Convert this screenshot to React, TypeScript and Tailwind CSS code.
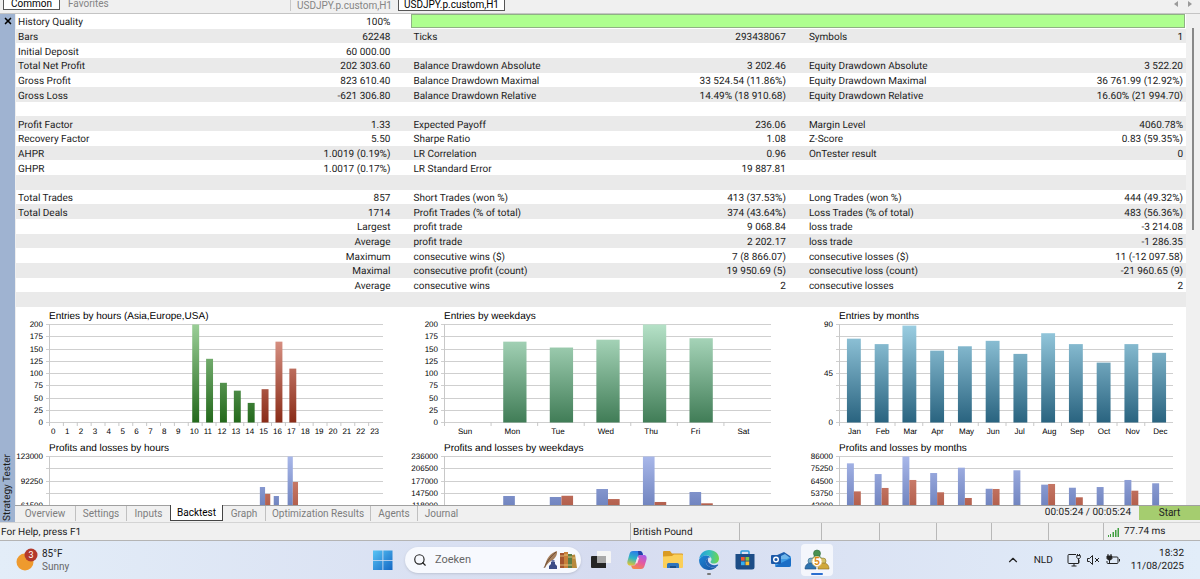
import type { ReactNode } from 'react';
import { ChevronUp, Search, X } from 'lucide-react';

type Cell = [label: string, value: string];

const EMPTY: Cell = ['', ''];

const STATS: [Cell, Cell, Cell][] = [
  [['Bars', '62248'], ['Ticks', '293438067'], ['Symbols', '1']],
  [['Initial Deposit', '60 000.00'], EMPTY, EMPTY],
  [
    ['Total Net Profit', '202 303.60'],
    ['Balance Drawdown Absolute', '3 202.46'],
    ['Equity Drawdown Absolute', '3 522.20'],
  ],
  [
    ['Gross Profit', '823 610.40'],
    ['Balance Drawdown Maximal', '33 524.54 (11.86%)'],
    ['Equity Drawdown Maximal', '36 761.99 (12.92%)'],
  ],
  [
    ['Gross Loss', '-621 306.80'],
    ['Balance Drawdown Relative', '14.49% (18 910.68)'],
    ['Equity Drawdown Relative', '16.60% (21 994.70)'],
  ],
  [EMPTY, EMPTY, EMPTY],
  [
    ['Profit Factor', '1.33'],
    ['Expected Payoff', '236.06'],
    ['Margin Level', '4060.78%'],
  ],
  [
    ['Recovery Factor', '5.50'],
    ['Sharpe Ratio', '1.08'],
    ['Z-Score', '0.83 (59.35%)'],
  ],
  [
    ['AHPR', '1.0019 (0.19%)'],
    ['LR Correlation', '0.96'],
    ['OnTester result', '0'],
  ],
  [['GHPR', '1.0017 (0.17%)'], ['LR Standard Error', '19 887.81'], EMPTY],
  [EMPTY, EMPTY, EMPTY],
  [
    ['Total Trades', '857'],
    ['Short Trades (won %)', '413 (37.53%)'],
    ['Long Trades (won %)', '444 (49.32%)'],
  ],
  [
    ['Total Deals', '1714'],
    ['Profit Trades (% of total)', '374 (43.64%)'],
    ['Loss Trades (% of total)', '483 (56.36%)'],
  ],
  [['', 'Largest'], ['profit trade', '9 068.84'], ['loss trade', '-3 214.08']],
  [['', 'Average'], ['profit trade', '2 202.17'], ['loss trade', '-1 286.35']],
  [
    ['', 'Maximum'],
    ['consecutive wins ($)', '7 (8 866.07)'],
    ['consecutive losses ($)', '11 (-12 097.58)'],
  ],
  [
    ['', 'Maximal'],
    ['consecutive profit (count)', '19 950.69 (5)'],
    ['consecutive loss (count)', '-21 960.65 (9)'],
  ],
  [['', 'Average'], ['consecutive wins', '2'], ['consecutive losses', '2']],
  [EMPTY, EMPTY, EMPTY],
];

const HOURS = Array.from({ length: 24 }, (_, i) => String(i));
const WEEKDAYS = ['Sun', 'Mon', 'Tue', 'Wed', 'Thu', 'Fri', 'Sat'];
const MONTHS = [
  'Jan', 'Feb', 'Mar', 'Apr', 'May', 'Jun',
  'Jul', 'Aug', 'Sep', 'Oct', 'Nov', 'Dec',
];

// slot index -> bar values, drawn side by side; each bar names its gradient
type Bar = { slot: number; values: number[]; fills: string[] };

const single = (from: number, fill: string, values: number[]): Bar[] =>
  values.map((v, i) => ({ slot: from + i, values: [v], fills: [fill] }));

const profitLoss = (from: number, pairs: number[][]): Bar[] =>
  pairs.map((values, i) => ({
    slot: from + i,
    values,
    fills: ['profit', 'loss'],
  }));

type ChartProps = {
  title: string;
  viewWidth: number;
  plotWidth: number;
  max: number;
  labels: string[];
  labelEvery?: number;
  categories: string[];
  categoryOffset: number;
  barInset?: number;
  bars: Bar[];
};

const CHARTS: ChartProps[] = [
  {
    title: 'Entries by hours (Asia,Europe,USA)',
    viewWidth: 395,
    plotWidth: 333,
    max: 200,
    labels: ['200', '175', '150', '125', '100', '75', '50', '25', '0'],
    categories: HOURS,
    categoryOffset: 1,
    bars: [
      ...single(10, 'europe', [200, 130, 81, 65, 40]),
      ...single(15, 'usa', [68, 165, 110]),
    ],
  },
  {
    title: 'Entries by weekdays',
    viewWidth: 395,
    plotWidth: 326,
    max: 200,
    labels: ['200', '175', '150', '125', '100', '75', '50', '25', '0'],
    categories: WEEKDAYS,
    categoryOffset: 13,
    bars: single(1, 'weekday', [165, 153, 169, 200, 172]),
  },
  {
    title: 'Entries by months',
    viewWidth: 380,
    plotWidth: 333,
    max: 90,
    labels: ['90', '45', '0'],
    labelEvery: 4,
    categories: MONTHS,
    categoryOffset: 8,
    bars: single(0, 'month', [77, 72, 89, 66, 70, 75, 63, 82, 72, 55, 72, 64]),
  },
  {
    title: 'Profits and losses by hours',
    viewWidth: 395,
    plotWidth: 333,
    max: 123000,
    labels: ['123000', '92250', '61500', '30750', '0'],
    labelEvery: 2,
    categories: HOURS,
    categoryOffset: 1,
    barInset: 0.125,
    bars: profitLoss(15, [[84700, 76000], [73400, 0], [123000, 91000]]),
  },
  {
    title: 'Profits and losses by weekdays',
    viewWidth: 395,
    plotWidth: 326,
    max: 236000,
    labels: ['236000', '206500', '177000', '147500', '118000', '88500', '59000', '29500', '0'],
    categories: WEEKDAYS,
    categoryOffset: 13,
    bars: profitLoss(1, [
      [140900, 0],
      [138500, 141500],
      [157700, 133500],
      [236000, 126500],
      [150500, 123300],
    ]),
  },
  {
    title: 'Profits and losses by months',
    viewWidth: 380,
    plotWidth: 333,
    max: 86000,
    labels: ['86000', '75250', '64500', '53750', '43000', '32250', '21500', '10750', '0'],
    categories: MONTHS,
    categoryOffset: 8,
    bars: profitLoss(0, [
      [80000, 55400],
      [70600, 58400],
      [86000, 65400],
      [71500, 54600],
      [76200, 49600],
      [57700, 57500],
      [73900, 0],
      [61300, 61900],
      [58600, 50200],
      [59200, 0],
      [65400, 56000],
      [62500, 0],
    ]),
  },
];

const GRADIENTS = [
  ['europe', '#9bcf98', '#24691c'],
  ['usa', '#e6a497', '#8a2c18'],
  ['weekday', '#b6e2c8', '#417d57'],
  ['month', '#9ccfe3', '#2a6480'],
  ['profit', '#a9b8ea', '#3a5296'],
  ['loss', '#dd9483', '#8a2c18'],
];

const PLOT_X = 34;
const PLOT_Y = 17;
const PLOT_H = 98;

function Chart({
  title,
  viewWidth,
  plotWidth,
  max,
  labels,
  labelEvery = 1,
  categories,
  categoryOffset,
  barInset = 0.25,
  bars,
}: ChartProps) {
  const slot = plotWidth / categories.length;
  const bottom = PLOT_Y + PLOT_H;

  return (
    <svg
      viewBox={`0 0 ${viewWidth} 132`}
      className="block w-full font-['Liberation_Sans',Arial,sans-serif] text-[8px] [text-rendering:geometricPrecision]"
      role="img"
      aria-label={title}
    >
      <text x={PLOT_X - 1} y="12" className="fill-black text-[10px]">
        {title}
      </text>
      {Array.from({ length: 9 }, (_, i) => {
        const y = Math.round(PLOT_Y + (i * PLOT_H) / 8) + 0.5;
        return (
          <line key={i} x1={PLOT_X - 4} x2={PLOT_X + plotWidth} y1={y} y2={y} stroke="#cfcfcf" />
        );
      })}
      <line x1={PLOT_X - 0.5} x2={PLOT_X - 0.5} y1={PLOT_Y} y2={bottom + 4} stroke="#c8c8c8" />
      {labels.map((label, i) => (
        <text
          key={label}
          x={PLOT_X - 7}
          y={PLOT_Y + (i * labelEvery * PLOT_H) / 8 + 3}
          textAnchor="end"
          className="fill-black"
        >
          {label}
        </text>
      ))}
      {categories.map((name, i) => (
        <g key={name}>
          <line
            x1={PLOT_X - 0.5 + i * slot}
            x2={PLOT_X - 0.5 + i * slot}
            y1={bottom}
            y2={bottom + 4}
            stroke="#c8c8c8"
          />
          <text x={PLOT_X + i * slot + categoryOffset} y="127" className="fill-black">
            {name}
          </text>
        </g>
      ))}
      {bars.map((bar) => {
        const width = (slot * (1 - barInset * 2)) / bar.values.length;
        return bar.values.map((value, i) => {
          const height = (value / max) * PLOT_H;
          return (
            <rect
              key={`${bar.slot}-${i}`}
              x={PLOT_X + bar.slot * slot + slot * barInset + i * width}
              y={bottom + 0.5 - height}
              width={width}
              height={height}
              fill={`url(#${bar.fills[i]})`}
            />
          );
        });
      })}
    </svg>
  );
}

function GradientDefs() {
  return (
    <svg width="0" height="0" className="absolute" aria-hidden="true">
      <defs>
        {GRADIENTS.map(([id, from, to]) => (
          <linearGradient
            key={id}
            id={id}
            gradientUnits="userSpaceOnUse"
            x1="0"
            x2="0"
            y1={PLOT_Y}
            y2={PLOT_Y + PLOT_H}
          >
            <stop stopColor={from} />
            <stop offset="1" stopColor={to} />
          </linearGradient>
        ))}
      </defs>
    </svg>
  );
}

function StatsTable() {
  return (
    <table className="h-[293px] w-full table-fixed border-collapse text-[10px] leading-[11px] whitespace-nowrap">
      <colgroup>
        <col className="w-[16.9%]" />
        <col className="w-[16.9%]" />
        <col className="w-[16.9%]" />
        <col className="w-[16.9%]" />
        <col />
        <col />
      </colgroup>
      <tbody>
        <tr>
          <th scope="row" className="h-3.5 p-0 pt-[3px] pl-0.5 text-left font-normal">
            History Quality
          </th>
          <td className="p-0 pt-[3px] pr-[21px] text-right">100%</td>
          <td colSpan={4} className="p-0 pr-px align-top">
            <div className="h-3.5 border border-[#8fb184] bg-[#aeff8f]" />
          </td>
        </tr>
        {STATS.map((row, i) => (
          <tr key={i} className="odd:bg-white even:bg-[#eaeaea]">
            {row.map(([label, value], j) => [
              <th key={`l${j}`} scope="row" className="h-3.5 p-0 pt-[3px] pl-0.5 text-left font-normal">
                {label}
              </th>,
              <td
                key={`v${j}`}
                className={j === 2 ? 'p-0 pt-[3px] pr-[3px] text-right' : 'p-0 pt-[3px] pr-[21px] text-right'}
              >
                {value}
              </td>,
            ])}
          </tr>
        ))}
      </tbody>
    </table>
  );
}

function WindowTabs() {
  return (
    <header className="flex h-3.5 shrink-0 items-end overflow-hidden border-b border-[#c4c4c4] pb-0.5 text-[10px] leading-[10px] text-[#858585]">
      <nav className="flex w-[290px] items-end pb-px pl-[3px]">
        <button className="w-[57px] border border-[#555] bg-white text-black">Common</button>
        <button className="px-2 pb-px">Favorites</button>
      </nav>
      <nav className="flex flex-1 items-end border-l border-[#c8c8c8]">
        <button className="w-[107px]">USDJPY.p.custom,H1</button>
        <button className="w-[107px] border border-[#555] bg-white text-black">USDJPY.p.custom,H1</button>
      </nav>
      <div className="flex gap-2.5 pr-2 pb-1">
        <button aria-label="Scroll tabs left">
          <svg viewBox="0 0 4 6" className="h-1.5 w-1 fill-[#9a9a9a]">
            <path d="M4 0v6L0 3z" />
          </svg>
        </button>
        <button aria-label="Scroll tabs right">
          <svg viewBox="0 0 4 6" className="h-1.5 w-1 fill-[#9a9a9a]">
            <path d="M0 0v6l4-3z" />
          </svg>
        </button>
      </div>
    </header>
  );
}

const TABS = [
  { name: 'Overview', className: 'w-[61px]' },
  { name: 'Settings', className: 'w-[51px]' },
  { name: 'Inputs', className: 'w-[43px]' },
  { name: 'Backtest', className: 'w-[53px]' },
  { name: 'Graph', className: 'w-[43px]' },
  { name: 'Optimization Results', className: 'w-[105px]' },
  { name: 'Agents', className: 'w-[47px]' },
  { name: 'Journal', className: 'w-[47px]' },
];

function TesterTabs() {
  return (
    <div className="flex h-[17px] shrink-0 items-start border-t border-[#a0a0a0] text-[10px] leading-[14px] whitespace-nowrap">
      <nav className="flex flex-1">
        {TABS.map(({ name, className }) =>
          name === 'Backtest' ? (
            <button
              key={name}
              className={`${className} -mt-px border border-t-0 border-[#444] bg-white pt-px text-black`}
            >
              {name}
            </button>
          ) : (
            <button
              key={name}
              className={`${className} border-r border-[#c0c0c0] text-[#7d7d7d] last:border-r-0 nth-[3]:border-r-0`}
            >
              {name}
            </button>
          )
        )}
      </nav>
      <span className="pr-2 text-[#222]">00:05:24 / 00:05:24</span>
      <button className="w-[61px] bg-[#a5cd6f] text-[#222]">Start</button>
    </div>
  );
}

function StatusBar() {
  return (
    <footer className="flex h-[19px] shrink-0 items-stretch border-y border-t-[#d4d4d4] border-b-[#b4b4b4] text-[10px] leading-[19px] text-[#222]">
      <span className="flex-1 pl-px">For Help, press F1</span>
      <span className="w-[109px] border-l border-[#b8b8b8] pl-0.5">British Pound</span>
      <span className="w-[82px] border-l border-[#b8b8b8]" />
      <span className="w-[58px] border-l border-[#b8b8b8]" />
      <span className="w-[57px] border-l border-[#b8b8b8]" />
      <span className="w-[55px] border-l border-[#b8b8b8]" />
      <span className="w-[57px] border-l border-[#b8b8b8]" />
      <span className="w-[55px] border-l border-[#b8b8b8]" />
      <span className="flex w-[97px] items-center gap-1 border-l border-[#b8b8b8] pl-1">
        <svg viewBox="0 0 12 10" className="h-2.5 w-3 fill-[#3f9f3f]" aria-hidden="true">
          <path d="M0 8h1v2H0zM2 7h1v3H2zM4.500 5h1.500v5h-1.500zM7 3h1.500v7H7zM9.500 1H11v9H9.500z" />
        </svg>
        77.74 ms
      </span>
    </footer>
  );
}

function TaskbarButton({ label, active, children }: { label: string; active?: boolean; children: ReactNode }) {
  return (
    <button aria-label={label} className="flex h-full w-9 items-center justify-center">
      <span
        className={
          active
            ? 'flex size-8 items-center justify-center rounded-sm bg-white/70'
            : 'flex size-8 items-center justify-center'
        }
      >
        {children}
      </span>
    </button>
  );
}

function WindowsLogo() {
  return (
    <svg viewBox="0 0 20 20" className="size-5">
      <defs>
        <linearGradient id="win" x1="0" y1="0" x2="1" y2="1">
          <stop stopColor="#58c4f5" />
          <stop offset="1" stopColor="#1467c4" />
        </linearGradient>
      </defs>
      <path fill="url(#win)" d="M0 .5h9.500V10H0zM10.300.5H19.500V10h-9.200zM0 10.700h9.500V20H0zM10.300 10.700h9.200V20h-9.200z" />
    </svg>
  );
}

function SearchArt() {
  return (
    <svg viewBox="0 0 34 20" className="h-5 w-[34px]" aria-hidden="true">
      <path d="M2 16C3 9 7 3 14 1c.5 4-2 8-6 10-2 1-4 3-6 7z" fill="#a77f5c" />
      <path d="M1 18C4 11 8 6 13 2" stroke="#5d4029" strokeWidth=".8" fill="none" />
      <path d="M8 12h4v2l2 2v3H6v-3l2-2z" fill="#3c4c86" />
      <path d="M8.500 10h3v2h-3z" fill="#6b77a8" />
      <path d="M17 3h4v15h-4z" fill="#a5542f" />
      <path d="M21 2h4v16h-4z" fill="#c9803a" />
      <path d="M25 4h4v14h-4z" fill="#5e7d45" />
      <path d="m29 5 3-.5L34 18h-5z" fill="#b8893c" />
      <path d="M17 6h4M17 15h4M21 5h4M21 15h4M25 7h4M25 15h4M29.500 8h3" stroke="#f0d08a" strokeWidth=".8" />
    </svg>
  );
}

function TaskViewIcon() {
  return (
    <svg viewBox="0 0 20 20" className="size-5">
      <path d="M6 1h13a1 1 0 0 1 1 1v11H6z" fill="#f5f5f5" />
      <path d="M1 6h14v12H1a1 1 0 0 1-1-1V7a1 1 0 0 1 1-1z" fill="#252525" />
      <path d="M6 6h9v7H6z" fill="#a9a9a9" />
    </svg>
  );
}

function CopilotIcon() {
  return (
    <svg viewBox="0 0 20 20" className="size-5">
      <defs>
        <linearGradient id="cop-a" x1=".5" y1="0" x2=".2" y2="1">
          <stop stopColor="#2b7be8" />
          <stop offset=".5" stopColor="#2fb5c4" />
          <stop offset="1" stopColor="#e8c52d" />
        </linearGradient>
        <linearGradient id="cop-b" x1=".8" y1="0" x2=".3" y2="1">
          <stop stopColor="#a65be8" />
          <stop offset=".5" stopColor="#e55aa0" />
          <stop offset="1" stopColor="#f4884a" />
        </linearGradient>
      </defs>
      <path
        d="M6 1h7c1.500 0 2 1 2.400 2L16 5h-3c-1.500 0-2.300 1-2.700 2.300L8.500 13C8 15 7 15.500 5.500 15.500H3C.5 15.500 0 13 .5 11l2-7C3 2 4 1 6 1z"
        fill="url(#cop-a)"
      />
      <path d="M11 1h2c1.500 0 2 1 2.400 2L16 5h-3l-1.500 1z" fill="#2343a8" />
      <path
        d="M14 19H7c-1.500 0-2-1-2.400-2L4 15.500h2.500c1.500 0 2-.8 2.500-2.500l1.700-5.500C11.200 5.700 12 5 13.500 5H17c2.500 0 3 2.500 2.500 4.500l-2 6.500c-.6 2-1.500 3-3.500 3z"
        fill="url(#cop-b)"
      />
      <path d="M10.300 7.500 8.600 13.200l1.600.3 2-5.800z" fill="#fff" opacity=".8" />
    </svg>
  );
}

function FolderIcon() {
  return (
    <svg viewBox="0 0 20 20" className="size-5">
      <path d="M0 2a1 1 0 0 1 1-1h6l2 2.500h10a1 1 0 0 1 1 1V8H0z" fill="#d99a23" />
      <path d="M0 6.500 9 6l2-1.500h8a1 1 0 0 1 1 1V17a1 1 0 0 1-1 1H1a1 1 0 0 1-1-1z" fill="#fbcf59" />
      <path d="M4 18v-3.500A1.500 1.500 0 0 1 5.500 13h9a1.500 1.500 0 0 1 1.500 1.500V18z" fill="#2f74bd" />
      <path d="M7 16h6v2H7z" fill="#1b4f88" />
    </svg>
  );
}

function EdgeIcon() {
  return (
    <svg viewBox="0 0 20 20" className="size-5">
      <defs>
        <linearGradient id="edge-a" x1="0" y1=".3" x2="1" y2=".4">
          <stop stopColor="#239bd8" />
          <stop offset=".5" stopColor="#36bfc0" />
          <stop offset="1" stopColor="#6cd64e" />
        </linearGradient>
        <linearGradient id="edge-b" x1="0" y1="0" x2="1" y2="1">
          <stop stopColor="#1c86d8" />
          <stop offset="1" stopColor="#174f9c" />
        </linearGradient>
      </defs>
      <path
        d="M.2 9C1 3.500 5 0 10 0c6 0 10 4 10 8.500 0 3-2.300 5-5.300 5-2 0-3.200-.7-3.200-1.500s1-1 1-2.700C12.500 7 10 5.500 7.500 5.500 4 5.500 1.500 7.500.2 9z"
        fill="url(#edge-a)"
      />
      <path
        d="M.1 9.500C1.500 7 4.500 5.300 7.500 5.500c2 .1 3.500 1 4.300 2.300C9 7 6.800 9 6.800 11.500c0 3.500 3.500 6 7 6 2 0 3.500-.8 4.500-1.500-2 2.700-5 4-8.300 4C4.500 20-.3 15.500.1 9.500z"
        fill="url(#edge-b)"
      />
      <path
        d="M6.800 11.500c0-2 1.200-3.400 2.700-3.800-.8 1-.8 3-.1 4.300 1.500 2.700 5.500 4 9.200 2.500.6-.2.800.2.500.7-.2.400-.5.600-.8.800-1 .7-2.500 1.500-4.500 1.500-3.500 0-7-2.500-7-6z"
        fill="#2464b4"
      />
    </svg>
  );
}

function StoreIcon() {
  return (
    <svg viewBox="0 0 20 20" className="size-5">
      <path d="M6 5V2a1 1 0 0 1 1-1h6a1 1 0 0 1 1 1v3" fill="none" stroke="#2a9bdc" strokeWidth="1.500" />
      <path d="M.5 4h19v13a2.500 2.500 0 0 1-2.500 2.500H3A2.500 2.500 0 0 1 .5 17z" fill="#1d4d86" />
      <path d="M6 7h3.700v3.700H6z" fill="#f0582f" />
      <path d="M10.500 7h3.700v3.700h-3.700z" fill="#84c341" />
      <path d="M6 11.500h3.700v3.700H6z" fill="#35aef0" />
      <path d="M10.500 11.500h3.700v3.700h-3.700z" fill="#fcc02e" />
    </svg>
  );
}

function OutlookIcon() {
  return (
    <svg viewBox="0 0 20 20" className="size-5">
      <path d="m4 6 9-4 6 4v6H4z" fill="#1d5fae" />
      <path d="m8 7 6-3 4 3v5H8z" fill="#6fb6ea" />
      <path d="M4 9h12l4-3v9a2 2 0 0 1-2 2H6a2 2 0 0 1-2-2z" fill="#3f9ce6" />
      <path d="m4 16 16-8v7a2 2 0 0 1-2 2H6a2 2 0 0 1-2-1z" fill="#1b6ec6" />
      <rect y="5" width="10" height="9" rx="1" fill="#1b59a8" />
      <circle cx="5" cy="9.500" r="2.300" fill="none" stroke="#fff" strokeWidth="1.400" />
    </svg>
  );
}

function TesterAppIcon() {
  return (
    <svg viewBox="0 0 26 22" className="h-[22px] w-[26px]">
      <circle cx="13" cy="4.500" r="3.500" fill="#4a9150" stroke="#2f6b3c" strokeWidth=".6" />
      <path d="M7 13c0-4 3-6 6-6s6 2 6 6z" fill="#6fa26c" stroke="#2f6b3c" strokeWidth=".6" />
      <circle cx="7" cy="12" r="3" fill="#7fb0c4" stroke="#2a6088" strokeWidth=".6" />
      <path d="M1 20c0-4 2.500-6 5.500-6s5.500 2 5.500 6z" fill="#2f73ae" stroke="#1f4f80" strokeWidth=".6" />
      <circle cx="19" cy="12" r="3" fill="#d3c268" stroke="#8a742a" strokeWidth=".6" />
      <path d="M14 20c0-4 2.500-6 5.500-6s5.500 2 5.500 6z" fill="#d0a83c" stroke="#8a6a20" strokeWidth=".6" />
      <circle cx="13" cy="12.500" r="5" fill="#fff" stroke="#e8c27a" strokeWidth=".8" />
      <text
        x="13"
        y="16"
        textAnchor="middle"
        className="fill-[#dc8a12] font-['Liberation_Sans',Arial,sans-serif] text-[10px] font-bold"
      >
        5
      </text>
    </svg>
  );
}

function Tray() {
  return (
    <div className="flex flex-1 items-center justify-end pr-4 text-[#222]">
      <button aria-label="Show hidden icons">
        <ChevronUp className="size-3.5" strokeWidth={2} />
      </button>
      <span className="ml-3.5 text-[10px]">NLD</span>
      <svg viewBox="0 0 54 14" className="ml-3.5 h-3.5 w-[54px] fill-none stroke-[#222]" aria-hidden="true">
        <path d="M9 1.500H2A1 1 0 0 0 1 2.500v7a1 1 0 0 0 1 1h9a1 1 0 0 0 1-1V7M4.500 13h5M7 10.500V13" />
        <path d="M10.500 1v1.500M12.500 1v1.500M9.800 2.500h3.500v2l-1 1.200h-1.500l-1-1.200zM11.500 6v4" />
        <path d="M20.500 5.500h2l3-3v9l-3-3h-2zM28 5l4 4M32 5l-4 4" />
        <path d="M45.500 4H50a1 1 0 0 1 1 1v4.500a1 1 0 0 1-1 1H41a1 1 0 0 1-1-1V8M52.500 6v2.500" />
        <path d="M41 1v2M44 1v2" />
        <path d="M40 3h5v2.500L43.500 7h-2L40 5.500zM42.500 7v3" fill="#222" />
      </svg>
      <div className="ml-2.5 text-right text-[10px] leading-[13px]">
        18:32
        <br />
        11/08/2025
      </div>
    </div>
  );
}

function Taskbar() {
  return (
    <footer className="flex h-[38px] shrink-0 items-center bg-linear-to-r from-[#e3edf8] via-[#d6dcf0] to-[#e2edf9] pl-4">
      <button className="flex flex-1 items-center gap-1 text-left text-[10px] leading-[13px]">
        <svg viewBox="0 0 22 26" className="h-[26px] w-[22px]" aria-hidden="true">
          <circle cx="9" cy="15" r="8.500" fill="#ee9a2e" />
          <circle cx="15" cy="8" r="6.500" fill="#b3392b" />
          <text
            x="15"
            y="11"
            textAnchor="middle"
            className="fill-white text-[9px]"
          >
            3
          </text>
        </svg>
        <span className="text-[#222]">
          85°F
          <br />
          <span className="text-[#666]">Sunny</span>
        </span>
      </button>
      <div className="ml-2 flex h-full items-center">
        <button aria-label="Start menu">
          <WindowsLogo />
        </button>
        <label className="mr-0.5 ml-3 flex h-[26px] w-44 items-center gap-2 rounded-full bg-[#f7f9fe] pr-1 pl-2 shadow-sm">
          <Search className="size-3.5 shrink-0 text-[#222]" strokeWidth={2} />
          <input
            type="search"
            aria-label="Zoeken"
            placeholder="Zoeken"
            className="min-w-0 flex-1 bg-transparent text-[11px] outline-none placeholder:text-[#666]"
          />
          <SearchArt />
        </label>
        <TaskbarButton label="Task view">
          <TaskViewIcon />
        </TaskbarButton>
        <TaskbarButton label="Copilot">
          <CopilotIcon />
        </TaskbarButton>
        <TaskbarButton label="File Explorer">
          <FolderIcon />
        </TaskbarButton>
        <div className="relative h-full">
          <TaskbarButton label="Edge">
            <EdgeIcon />
          </TaskbarButton>
          <span className="absolute bottom-1 left-4 h-0.5 w-1 rounded-full bg-[#777]" />
        </div>
        <TaskbarButton label="Store">
          <StoreIcon />
        </TaskbarButton>
        <TaskbarButton label="Outlook">
          <OutlookIcon />
        </TaskbarButton>
        <div className="relative h-full">
          <TaskbarButton label="MetaTrader" active>
            <TesterAppIcon />
          </TaskbarButton>
          <span className="absolute bottom-1 left-3 h-0.5 w-3 rounded-full bg-[#2a6fd0]" />
        </div>
      </div>
      <Tray />
    </footer>
  );
}

export default function App() {
  return (
    <div className="flex h-screen flex-col overflow-hidden bg-[#f0f0f0] font-['Roboto','Segoe_UI',sans-serif] text-[#1c1c1c] [text-rendering:geometricPrecision]">
      <GradientDefs />
      <WindowTabs />
      <div className="flex min-h-0 flex-1">
        <aside className="flex w-[15px] shrink-0 flex-col items-center justify-between bg-[#9fb3d1] pt-0.5 pb-px">
          <button aria-label="Close">
            <X className="size-2.5 text-black" strokeWidth={4} />
          </button>
          <span className="rotate-180 text-[10px] leading-[14px] whitespace-nowrap [writing-mode:vertical-rl]">
            Strategy Tester
          </span>
        </aside>
        <div className="flex min-w-0 flex-1 flex-col">
          <div className="flex min-h-0 flex-1 overflow-hidden">
            <main className="min-w-0 flex-1 border-l border-[#eee] bg-white">
              <StatsTable />
              <div className="grid grid-cols-[395fr_395fr_380fr]">
                {CHARTS.map((chart) => (
                  <Chart key={chart.title} {...chart} />
                ))}
              </div>
            </main>
            <div className="flex w-3.5 shrink-0 justify-center pt-3.5">
              <span className="h-[202px] w-0.5 bg-[#888]" />
            </div>
          </div>
          <TesterTabs />
        </div>
      </div>
      <StatusBar />
      <Taskbar />
    </div>
  );
}
